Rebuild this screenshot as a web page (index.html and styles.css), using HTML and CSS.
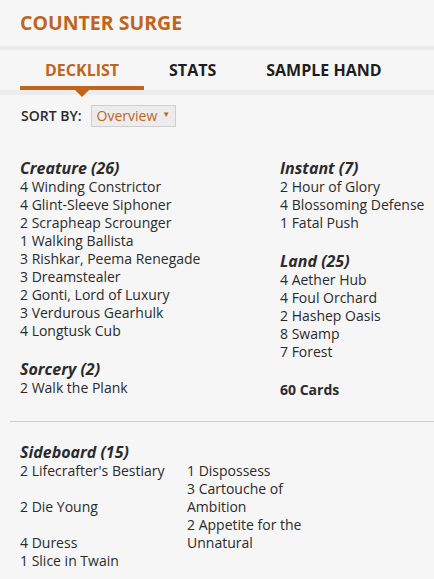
FILE: index.html
```html
<!DOCTYPE html>
<html>
<head>
<meta charset="utf-8">
<link rel="stylesheet" href="styles.css">
</head>
<body>
<div class="page">
  <h1 class="title">COUNTER SURGE</h1>
  <div class="tabbar">
    <div class="tab active">DECKLIST</div>
    <div class="tab">STATS</div>
    <div class="tab">SAMPLE HAND</div>
  </div>
  <div class="sort">
    <span class="sort-label">SORT BY:</span>
    <span class="select">Overview <span class="caret">▼</span></span>
  </div>
  <div class="main">
    <div class="col">
      <div class="group">
        <h3>Creature (26)</h3>
        <div>4 Winding Constrictor</div>
        <div>4 Glint-Sleeve Siphoner</div>
        <div>2 Scrapheap Scrounger</div>
        <div>1 Walking Ballista</div>
        <div>3 Rishkar, Peema Renegade</div>
        <div>3 Dreamstealer</div>
        <div>2 Gonti, Lord of Luxury</div>
        <div>3 Verdurous Gearhulk</div>
        <div>4 Longtusk Cub</div>
      </div>
      <div class="group">
        <h3>Sorcery (2)</h3>
        <div>2 Walk the Plank</div>
      </div>
    </div>
    <div class="col">
      <div class="group">
        <h3>Instant (7)</h3>
        <div>2 Hour of Glory</div>
        <div>4 Blossoming Defense</div>
        <div>1 Fatal Push</div>
      </div>
      <div class="group">
        <h3>Land (25)</h3>
        <div>4 Aether Hub</div>
        <div>4 Foul Orchard</div>
        <div>2 Hashep Oasis</div>
        <div>8 Swamp</div>
        <div>7 Forest</div>
      </div>
      <div class="total">60 Cards</div>
    </div>
  </div>
  <hr class="sep">
  <div class="side">
    <h3>Sideboard (15)</h3>
    <div class="side-grid">
      <div>2 Lifecrafter's Bestiary</div>
      <div class="r">1 Dispossess</div>
      <div>2 Die Young</div>
      <div class="r">3 Cartouche of Ambition</div>
      <div>4 Duress</div>
      <div class="r">2 Appetite for the Unnatural</div>
      <div>1 Slice in Twain</div>
      <div class="r"></div>
    </div>
  </div>
</div>
</body>
</html>
```
FILE: styles.css
```css
html, body {
  margin: 0;
  padding: 0;
  background: #f6f6f6;
}
body {
  font-family: "Open Sans", sans-serif;
  color: #2b2b2b;
  font-size: 14px;
  line-height: 18px;
}
.page {
  width: 434px;
  height: 579px;
  overflow: hidden;
}
.title {
  margin: 0;
  padding: 9px 20px 0 20px;
  height: 37px;
  font-size: 19.5px;
  line-height: 28px;
  font-weight: 700;
  color: #c0651c;
}
.tabbar {
  border-top: 4px solid #ebebeb;
  border-bottom: 5px solid #ececec;
  display: flex;
  padding: 0 0 0 20px;
  height: 40px;
  box-sizing: content-box;
}
.tab {
  font-size: 16px;
  font-weight: 700;
  color: #1e1e1e;
  line-height: 20px;
  padding: 10px 25px 0 25px;
  position: relative;
  white-space: nowrap;
}
.tab.active {
  color: #c0651c;
}
.tab.active::after {
  content: "";
  position: absolute;
  left: 0;
  right: 0;
  bottom: 0;
  height: 4px;
  background: #c0651c;
}
.tab.active::before {
  content: "";
  position: absolute;
  left: 50%;
  margin-left: -7px;
  bottom: -7px;
  border-left: 7px solid transparent;
  border-right: 7px solid transparent;
  border-top: 7px solid #c0651c;
}
.sort {
  display: flex;
  align-items: center;
  padding: 10px 0 0 21px;
  height: 22px;
}
.sort-label {
  font-size: 14px;
  font-weight: 600;
  color: #2b2b2b;
  margin-right: 9px;
}
.select {
  display: inline-flex;
  align-items: center;
  height: 20px;
  padding: 0 5px 0 5px;
  border: 1px solid #cfcfcf;
  background: #ececec;
  color: #c0651c;
  font-size: 14px;
}
.caret {
  font-size: 8px;
  margin-left: 5px;
  position: relative;
  top: -2px;
}
.main {
  display: grid;
  grid-template-columns: 260px 1fr;
  padding: 32px 0 0 20px;
}
.group {
  margin-bottom: 20px;
}
h3 {
  margin: 0;
  font-size: 16px;
  font-weight: 700;
  font-style: italic;
  line-height: 19px;
}
.group div {
  white-space: nowrap;
}
.col > .group:last-child {
  margin-bottom: 0;
}
.total {
  font-weight: 700;
}
.sep {
  border: 0;
  border-top: 1px solid #cdcdcd;
  margin: 22px 0 0 10px;
}
.side {
  padding: 21px 0 0 20px;
}
.side-grid {
  display: grid;
  grid-template-columns: 167px 126px;
  align-items: end;
}
```
